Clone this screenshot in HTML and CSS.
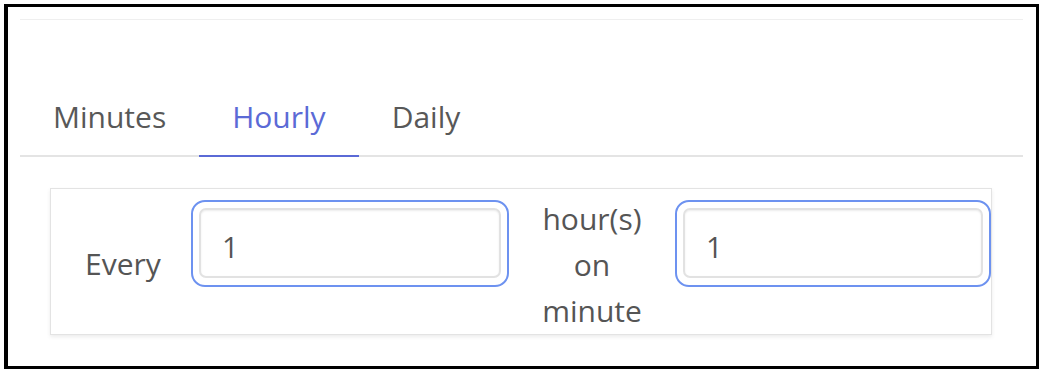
FILE: index.html
```html
<!DOCTYPE html>
<html>
<head>
<meta charset="utf-8">
<link rel="stylesheet" href="styles.css">
</head>
<body>
<div class="frame">
  <div class="panel">
    <div class="tabs">
      <div class="tab">Minutes</div>
      <div class="tab active">Hourly</div>
      <div class="tab">Daily</div>
    </div>
    <div class="card">
      <div class="label">Every</div>
      <div class="ring ring-first"><input class="field" type="text" value="1"></div>
      <div class="middle">hour(s)<br>on<br>minute</div>
      <div class="ring ring-last"><input class="field" type="text" value="1"></div>
    </div>
  </div>
</div>
</body>
</html>
```

FILE: styles.css
```css
html, body {
  margin: 0;
  padding: 0;
  background: #ffffff;
}
body {
  width: 1045px;
  height: 373px;
  overflow: hidden;
  font-family: "Open Sans", "Noto Sans", sans-serif;
  color: #555555;
}
.frame {
  box-sizing: border-box;
  margin: 4px 0 0 4px;
  width: 1035px;
  height: 365px;
  border: 3px solid #000000;
  border-left-width: 4px;
  padding: 12px 13px 0 12px;
}
.panel {
  border-top: 1px solid #efefef;
}
.tabs {
  display: flex;
  margin-top: 77px;
  border-bottom: 2px solid #e4e4e4;
}
.tab {
  font-size: 30px;
  line-height: 40px;
  padding: 0 33px 18px 33px;
  color: #585858;
  margin-bottom: -2px;
  border-bottom: 2px solid transparent;
}
.tab.active {
  color: #5b6ad6;
  border-bottom-color: #5b6ad6;
}
.card {
  display: flex;
  align-items: flex-start;
  margin: 31px 0 0 30px;
  width: 942px;
  box-sizing: border-box;
  border: 1px solid #e3e3e3;
  box-shadow: 0 2px 4px rgba(0, 0, 0, 0.08);
  background: #ffffff;
}
.label {
  align-self: center;
  margin-top: 5px;
  padding: 0 30px 0 34px;
  font-size: 30px;
  line-height: 46px;
  width: 76px;
}
.ring {
  box-sizing: border-box;
  margin-top: 11px;
  height: 87px;
  border: 2.5px solid #6d92f0;
  border-radius: 14px;
  padding: 6px;
  background: #ffffff;
}
.ring-first {
  width: 318px;
}
.ring-last {
  flex: 1;
}
.field {
  display: block;
  box-sizing: border-box;
  width: 100%;
  height: 70px;
  margin: 0;
  border: 2px solid #e2e2e2;
  border-radius: 7px;
  box-shadow: inset 0 1px 2px rgba(0, 0, 0, 0.08);
  padding: 6px 0 0 21px;
  font-family: "Open Sans", "Noto Sans", sans-serif;
  font-size: 29px;
  color: #555555;
  background: #ffffff;
  outline: none;
}
.middle {
  width: 166px;
  flex: none;
  text-align: center;
  font-size: 30px;
  line-height: 46px;
  padding: 7px 0 0 0;
}
```
